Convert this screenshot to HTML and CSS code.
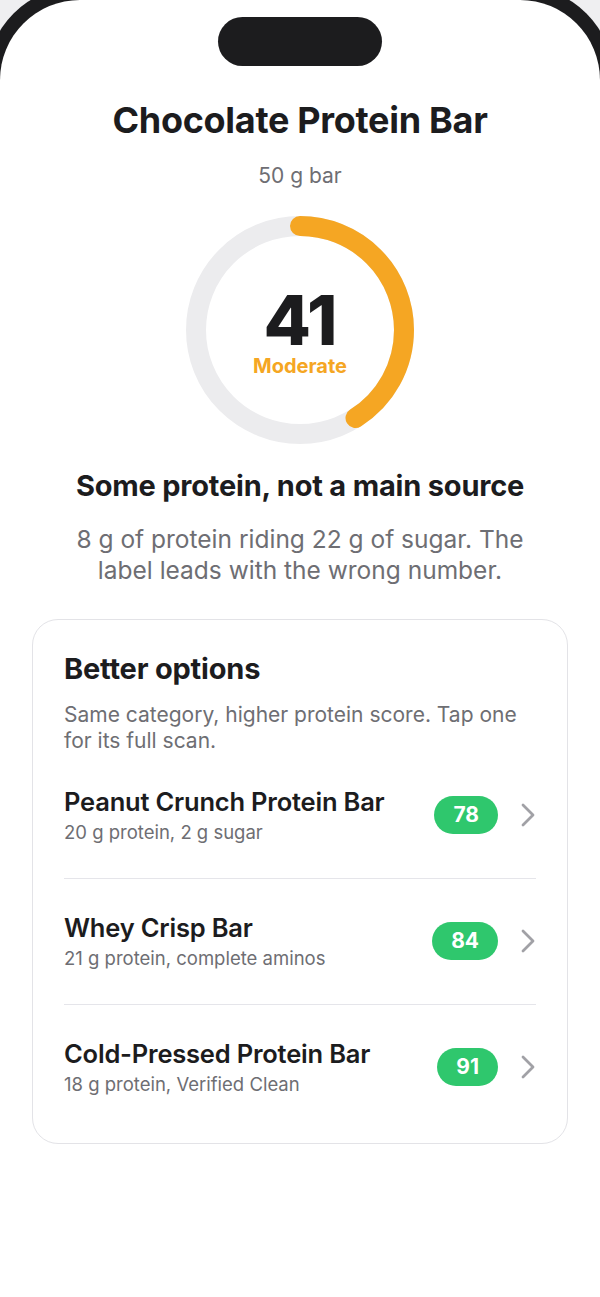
FILE: index.html
```html
<!DOCTYPE html>
<html lang="en">
<head>
  <meta charset="UTF-8">
  <title>Chocolate Protein Bar</title>
  <link rel="stylesheet" href="styles.css">
</head>
<body>
<div class="screen">
  <div class="island"></div>

  <main class="content">
    <h1 class="title">Chocolate Protein Bar</h1>
    <p class="serving">50 g bar</p>

    <div class="gauge">
      <svg class="gauge-ring" viewBox="0 0 228 228" width="228" height="228">
        <circle class="gauge-track" cx="114" cy="114" r="104"/>
        <!-- 41% of the circumference -->
        <circle class="gauge-fill" cx="114" cy="114" r="104" transform="rotate(-90 114 114)" style="stroke-dasharray: 267.9 653.5"/>
      </svg>
      <div class="gauge-center">
        <span class="gauge-score">41</span>
        <span class="gauge-label">Moderate</span>
      </div>
    </div>

    <h2 class="verdict">Some protein, not a main source</h2>
    <p class="verdict-text">8 g of protein riding 22 g of sugar. The label leads with the wrong number.</p>

    <section class="card">
      <h3 class="card-title">Better options</h3>
      <p class="card-sub">Same category, higher protein score. Tap one for its full scan.</p>

      <ul class="options">
        <li class="option">
          <div class="option-info">
            <div class="option-name">Peanut Crunch Protein Bar</div>
            <div class="option-meta">20 g protein, 2 g sugar</div>
          </div>
          <span class="badge">78</span>
          <svg class="chevron" viewBox="0 0 16 24" width="16" height="24"><path d="M3 2l10 10-10 10"/></svg>
        </li>
        <li class="option">
          <div class="option-info">
            <div class="option-name">Whey Crisp Bar</div>
            <div class="option-meta">21 g protein, complete aminos</div>
          </div>
          <span class="badge">84</span>
          <svg class="chevron" viewBox="0 0 16 24" width="16" height="24"><path d="M3 2l10 10-10 10"/></svg>
        </li>
        <li class="option">
          <div class="option-info">
            <div class="option-name">Cold-Pressed Protein Bar</div>
            <div class="option-meta">18 g protein, Verified Clean</div>
          </div>
          <span class="badge">91</span>
          <svg class="chevron" viewBox="0 0 16 24" width="16" height="24"><path d="M3 2l10 10-10 10"/></svg>
        </li>
      </ul>
    </section>
  </main>
</div>
</body>
</html>
```

FILE: styles.css
```css
* {
  margin: 0;
  padding: 0;
  box-sizing: border-box;
}

ul {
  list-style: none
}

html,
body {
  height: 100%;
  overflow: hidden;
}

body {
  background-color: #efeff1;
  font-family: Inter, "Liberation Sans", sans-serif;
  color: #1c1c1e;
}

/* phone screen, bezel only shows at the top corners */
.screen {
  min-height: 100%;
  background-color: #fff;
  border-radius: 80px 80px 0 0;
  box-shadow: 0 0 0 14px #1c1c1e;
  padding-top: 17px;
}

.island {
  width: 164px;
  height: 49px;
  margin: 0 auto;
  border-radius: 25px;
  background-color: #1c1c1e;
}

.content {
  display: flex;
  flex-direction: column;
  align-items: center;
  text-align: center;
}

.title {
  margin-top: 32px;
  font-size: 36px;
  font-weight: 700;
  line-height: 44px;
  letter-spacing: -0.3px;
}

.serving {
  margin-top: 21px;
  font-size: 21px;
  line-height: 26px;
  color: #6e6e73;
}

.gauge {
  position: relative;
  width: 228px;
  height: 228px;
  margin-top: 27px;
}

.gauge-ring {
  display: block;
}

.gauge-track,
.gauge-fill {
  fill: none;
  stroke-width: 20;
}

.gauge-track {
  stroke: #ececee;
}

.gauge-fill {
  stroke: #f5a623;
  stroke-linecap: round;
}

.gauge-center {
  position: absolute;
  inset: 0;
  display: flex;
  flex-direction: column;
  align-items: center;
  padding-top: 74px;
}

.gauge-score {
  font-size: 69px;
  font-weight: 800;
  line-height: 60px;
  letter-spacing: -1px;
}

.gauge-label {
  margin-top: 4px;
  font-size: 20px;
  font-weight: 700;
  line-height: 24px;
  color: #f5a623;
}

.verdict {
  margin-top: 24px;
  font-size: 29px;
  font-weight: 700;
  line-height: 36px;
  letter-spacing: -0.2px;
}

.verdict-text {
  max-width: 480px;
  margin-top: 20px;
  font-size: 24.5px;
  line-height: 31px;
  color: #6e6e73;
}

.card {
  align-self: stretch;
  margin: 33px 32px 0;
  padding: 31px 31px 13px;
  border: 1px solid #e3e3e7;
  border-radius: 26px;
  text-align: left;
}

.card-title {
  font-size: 29px;
  font-weight: 700;
  line-height: 36px;
  letter-spacing: -0.2px;
}

.card-sub {
  margin-top: 15px;
  font-size: 21px;
  line-height: 26px;
  color: #6e6e73;
}

.option {
  display: flex;
  align-items: center;
  padding: 33px 0 35px;
  border-bottom: 1px solid #e5e5ea;
}

.option + .option {
  padding-top: 34px;
}

.option:last-child {
  border-bottom: none;
}

.option-info {
  flex: 1;
}

.option-name {
  font-size: 25.5px;
  font-weight: 600;
  line-height: 30px;
  letter-spacing: -0.2px;
}

.option-meta {
  margin-top: 4px;
  font-size: 18.5px;
  line-height: 22px;
  color: #6e6e73;
}

.badge {
  height: 38px;
  padding: 0 19px;
  border-radius: 19px;
  background-color: #2fc76d;
  color: #fff;
  font-size: 21px;
  font-weight: 700;
  line-height: 38px;
}

.chevron {
  margin-left: 22px;
  fill: none;
  stroke: #a1a1a6;
  stroke-width: 2.8;
  stroke-linecap: round;
  stroke-linejoin: round;
}
```
